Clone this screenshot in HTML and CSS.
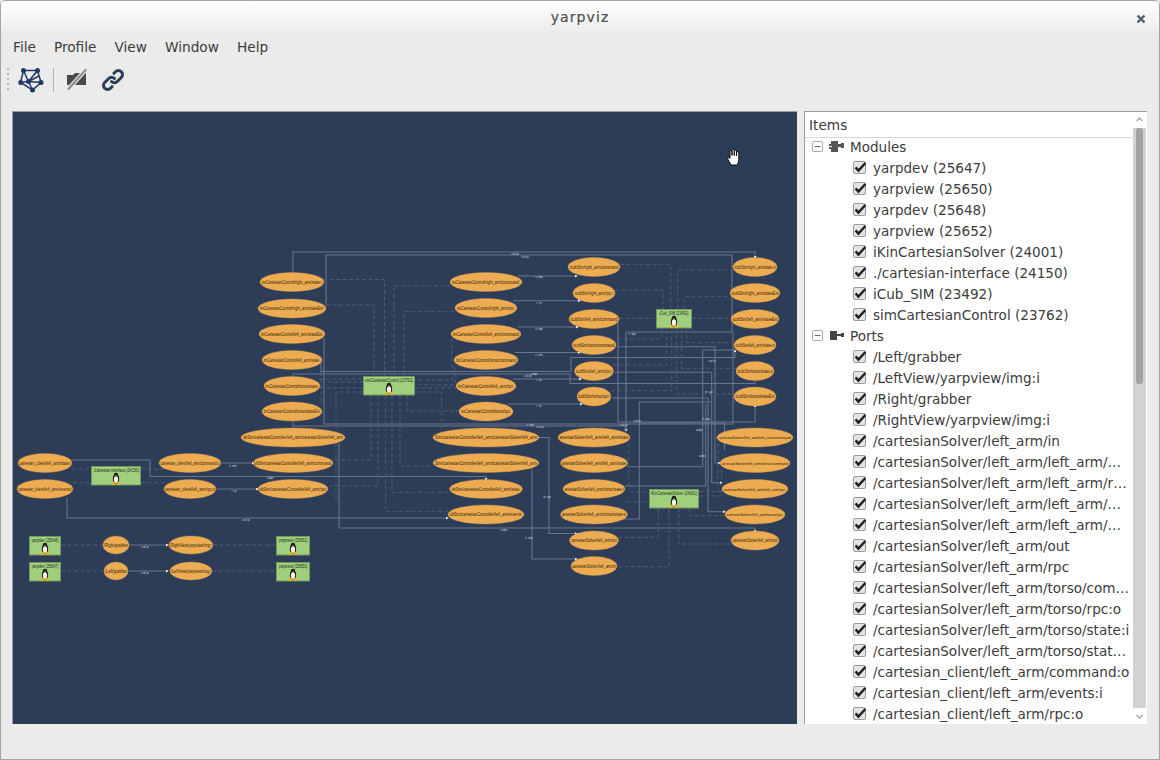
FILE: index.html
```html
<!DOCTYPE html>
<html lang="en">
<head>
<meta charset="utf-8">
<title>yarpviz</title>
<link rel="stylesheet" href="styles.css">
</head>
<body>
<svg class="defs" width="0" height="0">
  <defs>
    <marker id="tip" viewBox="0 0 4 4" refX="3" refY="2" markerWidth="3" markerHeight="3" markerUnits="userSpaceOnUse" orient="auto"><path d="M0 0L4 2L0 4Z" fill="#eef0f4"/></marker>
    <symbol id="tux" viewBox="0 0 12 14">
      <ellipse cx="6" cy="7.5" rx="3.4" ry="5" fill="#1d1d1f"/>
      <circle cx="6" cy="3" r="2.3" fill="#1d1d1f"/>
      <ellipse cx="6" cy="8.2" rx="2.3" ry="3.7" fill="#f4f4f0"/>
      <path d="M5.1 3.4h1.8L6 4.5Z" fill="#f2b21c"/>
      <path d="M0.5 12L4.300 10.300L5.300 13.300L2 14Z M11.500 12L7.700 10.300L6.700 13.300L10 14Z" fill="#f3b41b"/>
    </symbol>
    <symbol id="check" viewBox="0 0 13 13">
      <rect x="0.5" y="0.5" width="12" height="12" rx="1.5" fill="#e4e4e4" stroke="#9a9a9a"/>
      <path d="M2.6 6.4L5.4 9.6L12.4 2" fill="none" stroke="#202020" stroke-width="2.4"/>
    </symbol>
    <symbol id="minus" viewBox="0 0 11 11">
      <rect x="0.5" y="0.5" width="10" height="10" rx="1.5" fill="#fff" stroke="#aaaaaa"/>
      <path d="M2.5 5.5H8.5" stroke="#666" stroke-width="1"/>
    </symbol>
  </defs>
</svg>

<div class="window">
  <header class="titlebar">
    <span class="title">yarpviz</span>
    <svg class="close" width="10" height="10" viewBox="0 0 10 10"><path d="M1.5 1.5L8.5 8.5M8.5 1.5L1.5 8.5" stroke="#4f5f6f" stroke-width="2.4"/></svg>
  </header>

  <nav class="menubar">
    <span>File</span><span>Profile</span><span>View</span><span>Window</span><span>Help</span>
  </nav>

  <div class="toolbar">
    <span class="grip"></span>
    <button class="tool">
      <svg width="26" height="26" viewBox="0 0 26 26">
        <g stroke="#1f3a68" stroke-width="1.5" fill="none">
          <path d="M5.500 3.500L19.500 3.500L23 15.500L14.500 23L2.500 15.500Z"/>
          <path d="M5.500 3.500L10.500 14.500L19.500 3.500M2.500 15.500L10.500 14.500L23 15.500M10.500 14.500L14.500 23M10.500 14.500L21 9"/>
        </g>
        <g fill="#1f3a68">
          <circle cx="5.500" cy="3.500" r="2.500"/><circle cx="19.500" cy="3.500" r="2.500"/><circle cx="23" cy="15.500" r="2.500"/>
          <circle cx="2.800" cy="15.500" r="2.500"/><circle cx="14.500" cy="23" r="2.500"/><circle cx="10.500" cy="14.500" r="2.500"/>
        </g>
      </svg>
    </button>
    <span class="sep"></span>
    <button class="tool tool-gap">
      <svg width="24" height="24" viewBox="0 0 24 24">
        <path d="M2 7H8L10 5H21V17H2Z" fill="#4a4a4a"/>
        <path d="M3 21.5L21 1.5" stroke="#ececec" stroke-width="4.2"/>
        <path d="M3 21.5L21 1.5" stroke="#8d8d8d" stroke-width="2.2"/>
      </svg>
    </button>
    <button class="tool tool-on">
      <svg width="24" height="24" viewBox="0 0 24 24" fill="none" stroke="#2c3e57" stroke-width="3" stroke-linecap="round">
        <path d="M10.5 13.5a4 4 0 0 0 5.800 0l4-4a4.100 4.100 0 0 0-5.800-5.800l-1.600 1.600"/>
        <path d="M13.5 10.5a4 4 0 0 0-5.800 0l-4 4a4.100 4.100 0 0 0 5.800 5.800l1.600-1.600"/>
      </svg>
    </button>
  </div>

  <main class="content">
    <section class="canvas">
      <svg class="graph" width="784" height="612" viewBox="13 112 784 612">
        <g class="edge">
          <path marker-end="url(#tip)" d="M293 273V252H755V258"/>
          <path marker-end="url(#tip)" d="M326 305V255H732V332H626V431"/>
          <path d="M324 338V424H733V332"/>
          <path d="M293 421V426H625V431"/>
          <path marker-end="url(#tip)" d="M321 362V371.5H571V357.5H735V350"/>
          <path d="M293 377V374H570V383.5H755V381"/>
          <path marker-end="url(#tip)" d="M518 276H577"/>
          <path marker-end="url(#tip)" d="M513 300.7H580"/>
          <path marker-end="url(#tip)" d="M518 327H578"/>
          <path marker-end="url(#tip)" d="M515 352.5H580"/>
          <path marker-end="url(#tip)" d="M513 379H581"/>
          <path marker-end="url(#tip)" d="M508 404H582"/>
          <path marker-end="url(#tip)" d="M618 319V422H755V405"/>
          <path marker-end="url(#tip)" d="M72 460H150V476.5H486V480"/>
          <path marker-end="url(#tip)" d="M222 463H254"/>
          <path marker-end="url(#tip)" d="M216 489H258"/>
          <path marker-end="url(#tip)" d="M67 498V518H448"/>
          <path marker-end="url(#tip)" d="M339 443V528H755V532"/>
          <path marker-end="url(#tip)" d="M538 437.5H549V533.5H577"/>
          <path marker-end="url(#tip)" d="M532 467V559H577"/>
          <path d="M627 466.7H702.7V350H735"/>
          <path d="M625 486H705.7V404"/>
          <path marker-end="url(#tip)" d="M615 372.3H711.7V482.7H722"/>
          <path marker-end="url(#tip)" d="M618 346.7H715V463H720"/>
          <path d="M623 519H639.3V402H712"/>
          <path marker-end="url(#tip)" d="M612 398H708V511.7H725"/>
          <path d="M640 423H724.5V450"/>
          <path marker-end="url(#tip)" d="M129 545H168"/>
          <path marker-end="url(#tip)" d="M128 571H168"/>
        </g>
        <g class="dash">
          <path d="M323 279.5H384.5V376"/>
          <path d="M326 305H374V376"/>
          <path d="M394 376V285.7H450"/>
          <path d="M404 376V311.7H455"/>
          <path d="M452 338V380H415"/>
          <path d="M455 360V385H415"/>
          <path d="M415 388H456"/>
          <path d="M407 395V411H459"/>
          <path d="M319 379H363"/>
          <path d="M321 382H363"/>
          <path d="M320 388H363"/>
          <path d="M321 372V405"/>
          <path d="M363 392H336V500"/>
          <path d="M371 395V460H335"/>
          <path d="M378 395V486H330"/>
          <path d="M385.7 395V511.7H448"/>
          <path d="M392 395V492.3H450"/>
          <path d="M400 395V466H433"/>
          <path d="M415 392H441.7V433"/>
          <path d="M72 469H91"/>
          <path d="M73 482.7H91"/>
          <path d="M141 469H165"/>
          <path d="M141 482.7H168"/>
          <path d="M61 545H103"/>
          <path d="M61 571H104"/>
          <path d="M213 545H276"/>
          <path d="M212 571H276"/>
          <path d="M620 264.3H670.7V309"/>
          <path d="M615 290H663V309"/>
          <path d="M677.7 309V270H733"/>
          <path d="M684 309V296.7H731"/>
          <path d="M619 318.3H656"/>
          <path d="M692 318.3H731"/>
          <path d="M617 339H661.7V328"/>
          <path d="M613 365H666.7V328"/>
          <path d="M611 390.7H671.7V328"/>
          <path d="M676.7 328V394H735"/>
          <path d="M681.7 328V368.3H736"/>
          <path d="M686.7 328V342.7H734"/>
          <path d="M630 491.7H649"/>
          <path d="M627 501.7H649"/>
          <path d="M628.7 437V490"/>
          <path d="M618 537.3H658.3V508"/>
          <path d="M618 566.7H669V508"/>
          <path d="M679 508V544H731"/>
          <path d="M689.3 508V515.7H726"/>
          <path d="M699 491.7H724"/>
          <path d="M699 496H722"/>
          <path d="M718 437V496"/>
          <path d="M721.7 463V491.7"/>
        </g>

        <g class="elabels">
          <text x="515" y="255">cd p</text><text x="525" y="258">cd p</text>
          <text x="539" y="278">c dp</text><text x="539" y="304">r p</text>
          <text x="539" y="330">c dp</text><text x="539" y="356">c dn</text>
          <text x="539" y="381">r p</text><text x="539" y="407">r p</text>
          <text x="528" y="377">cd p</text><text x="534" y="375">sdp</text>
          <text x="530" y="426">c dp</text><text x="540" y="428">cd p</text>
          <text x="632" y="335">c dp</text><text x="712" y="362">cd p</text>
          <text x="709" y="393">b sp</text><text x="706" y="420">b sp</text>
          <text x="699" y="431">sdp</text><text x="702" y="457">sdp</text>
          <text x="637" y="422">cd p</text><text x="624" y="426">cd p</text>
          <text x="547" y="498">b sp</text><text x="504" y="531">sdp</text>
          <text x="529" y="539">c dp</text><text x="233" y="467">c dn</text>
          <text x="234" y="492">r p</text><text x="270" y="479">sdp</text>
          <text x="246" y="521">cd p</text><text x="145" y="548">cd p</text>
          <text x="145" y="574">cd p</text>
        </g>

        <g class="port">
          <ellipse cx="292" cy="282" rx="32" ry="9.5"/><text x="292" y="283.7" textLength="60" lengthAdjust="spacingAndGlyphs">imCartesianControl/right_arm/state:i</text>
          <ellipse cx="292" cy="308.5" rx="34" ry="9.5"/><text x="292" y="310.2" textLength="64" lengthAdjust="spacingAndGlyphs">imCartesianControl/right_arm/stateExt:</text>
          <ellipse cx="292" cy="334" rx="33" ry="9.5"/><text x="292" y="335.7" textLength="62" lengthAdjust="spacingAndGlyphs">imCartesianControl/left_arm/stateExt:</text>
          <ellipse cx="292" cy="360" rx="30" ry="9.5"/><text x="292" y="361.7" textLength="57" lengthAdjust="spacingAndGlyphs">imCartesianControl/left_arm/state:</text>
          <ellipse cx="292" cy="386" rx="28" ry="9.5"/><text x="292" y="387.7" textLength="53" lengthAdjust="spacingAndGlyphs">imCartesianControl/torso/state:</text>
          <ellipse cx="292" cy="411.5" rx="30" ry="9.5"/><text x="292" y="413.2" textLength="57" lengthAdjust="spacingAndGlyphs">imCartesianControl/torso/stateExt:</text>

          <ellipse cx="486" cy="282" rx="36" ry="9.5"/><text x="486" y="283.7" textLength="68" lengthAdjust="spacingAndGlyphs">imCartesianControl/right_arm/command:</text>
          <ellipse cx="486" cy="308" rx="31" ry="9.5"/><text x="486" y="309.7" textLength="58" lengthAdjust="spacingAndGlyphs">imCartesianControl/right_arm/rpc:</text>
          <ellipse cx="486" cy="334" rx="35" ry="9.5"/><text x="486" y="335.7" textLength="66" lengthAdjust="spacingAndGlyphs">imCartesianControl/left_arm/command</text>
          <ellipse cx="486" cy="360" rx="32" ry="9.5"/><text x="486" y="361.7" textLength="60" lengthAdjust="spacingAndGlyphs">imCartesianControl/torso/command</text>
          <ellipse cx="486" cy="386" rx="30" ry="9.5"/><text x="486" y="387.7" textLength="56" lengthAdjust="spacingAndGlyphs">imCartesianControl/left_arm/rpc:</text>
          <ellipse cx="486" cy="411.5" rx="27" ry="9.5"/><text x="486" y="413.2" textLength="50" lengthAdjust="spacingAndGlyphs">imCartesianControl/torso/rpc:</text>

          <ellipse cx="594" cy="267" rx="26" ry="9.5"/><text x="594" y="268.7" textLength="48" lengthAdjust="spacingAndGlyphs">icubSim/right_arm/command</text>
          <ellipse cx="594" cy="293" rx="21" ry="9.5"/><text x="594" y="294.7" textLength="38" lengthAdjust="spacingAndGlyphs">icubSim/right_arm/rpc:i</text>
          <ellipse cx="594" cy="319" rx="25" ry="9.5"/><text x="594" y="320.7" textLength="47" lengthAdjust="spacingAndGlyphs">icubSim/left_arm/command</text>
          <ellipse cx="594" cy="345" rx="22" ry="9.5"/><text x="594" y="346.7" textLength="41" lengthAdjust="spacingAndGlyphs">icubSim/torso/command</text>
          <ellipse cx="594" cy="371" rx="19.5" ry="9.5"/><text x="594" y="372.7" textLength="36" lengthAdjust="spacingAndGlyphs">icubSim/left_arm/rpc:i</text>
          <ellipse cx="594" cy="396.5" rx="17" ry="9.5"/><text x="594" y="398.2" textLength="32" lengthAdjust="spacingAndGlyphs">icubSim/torso/rpc:i</text>

          <ellipse cx="755" cy="267" rx="22" ry="9.5"/><text x="755" y="268.7" textLength="41" lengthAdjust="spacingAndGlyphs">icubSim/right_arm/state:o</text>
          <ellipse cx="755" cy="293" rx="25" ry="9.5"/><text x="755" y="294.7" textLength="47" lengthAdjust="spacingAndGlyphs">icubSim/right_arm/stateExt</text>
          <ellipse cx="755" cy="319" rx="24" ry="9.5"/><text x="755" y="320.7" textLength="45" lengthAdjust="spacingAndGlyphs">icubSim/left_arm/stateExt</text>
          <ellipse cx="755" cy="345" rx="21" ry="9.5"/><text x="755" y="346.7" textLength="39" lengthAdjust="spacingAndGlyphs">icubSim/left_arm/state:o</text>
          <ellipse cx="755" cy="371" rx="19" ry="9.5"/><text x="755" y="372.7" textLength="35" lengthAdjust="spacingAndGlyphs">icubSim/torso/state:o</text>
          <ellipse cx="755" cy="396.5" rx="21" ry="9.5"/><text x="755" y="398.2" textLength="39" lengthAdjust="spacingAndGlyphs">icubSim/torso/stateExt</text>

          <ellipse cx="293" cy="437.5" rx="52" ry="9.5"/><text x="293" y="439.2" textLength="100" lengthAdjust="spacingAndGlyphs">ubSim/cartesianController/left_arm/cartesianSolver/left_arm</text>
          <ellipse cx="486" cy="437.5" rx="53" ry="9.5"/><text x="486" y="439.2" textLength="102" lengthAdjust="spacingAndGlyphs">Sim/cartesianController/left_arm/cartesianSolver/left_arm</text>
          <ellipse cx="486" cy="463" rx="53" ry="9.5"/><text x="486" y="464.7" textLength="102" lengthAdjust="spacingAndGlyphs">Sim/cartesianController/left_arm/cartesianSolver/left_arm</text>
          <ellipse cx="486" cy="489" rx="36.5" ry="9.5"/><text x="486" y="490.7" textLength="69" lengthAdjust="spacingAndGlyphs">ubSim/cartesianController/left_arm/state:</text>
          <ellipse cx="486" cy="514.5" rx="38" ry="9.5"/><text x="486" y="516.2" textLength="73" lengthAdjust="spacingAndGlyphs">ubSim/cartesianController/left_arm/events:</text>

          <ellipse cx="594" cy="437.5" rx="36" ry="9.5"/><text x="594" y="439.2" textLength="69" lengthAdjust="spacingAndGlyphs">artesianSolver/left_arm/left_arm/state</text>
          <ellipse cx="594" cy="463" rx="33.5" ry="9.5"/><text x="594" y="464.7" textLength="64" lengthAdjust="spacingAndGlyphs">artesianSolver/left_arm/left_arm/state</text>
          <ellipse cx="594" cy="489" rx="31" ry="9.5"/><text x="594" y="490.7" textLength="59" lengthAdjust="spacingAndGlyphs">artesianSolver/left_arm/torso/state:i</text>
          <ellipse cx="594" cy="514.5" rx="33.5" ry="9.5"/><text x="594" y="516.2" textLength="64" lengthAdjust="spacingAndGlyphs">artesianSolver/left_arm/torso/state:o</text>
          <ellipse cx="594" cy="540.5" rx="24.5" ry="9.5"/><text x="594" y="542.2" textLength="46" lengthAdjust="spacingAndGlyphs">cartesianSolver/left_arm/rpc</text>
          <ellipse cx="594" cy="566" rx="23" ry="9.5"/><text x="594" y="567.7" textLength="44" lengthAdjust="spacingAndGlyphs">cartesianSolver/left_arm/in</text>

          <ellipse cx="755" cy="437.5" rx="38" ry="9.5"/><text class="long" x="755" y="439" textLength="72" lengthAdjust="spacingAndGlyphs">artesianSolver/left_arm/left_arm/command</text>
          <ellipse cx="755" cy="463" rx="35" ry="9.5"/><text class="long" x="755" y="464.5" textLength="66" lengthAdjust="spacingAndGlyphs">artesianSolver/left_arm/torso/command</text>
          <ellipse cx="755" cy="489" rx="33" ry="9.5"/><text class="long" x="755" y="490.5" textLength="62" lengthAdjust="spacingAndGlyphs">artesianSolver/left_arm/left_arm/rpc:</text>
          <ellipse cx="755" cy="514.5" rx="30" ry="9.5"/><text class="long" x="755" y="516" textLength="57" lengthAdjust="spacingAndGlyphs">artesianSolver/left_arm/torso/rpc:</text>
          <ellipse cx="755" cy="540.5" rx="24" ry="9.5"/><text x="755" y="542.2" textLength="45" lengthAdjust="spacingAndGlyphs">cartesianSolver/left_arm/out</text>

          <ellipse cx="45" cy="463" rx="27" ry="9.5"/><text x="45" y="464.7" textLength="52" lengthAdjust="spacingAndGlyphs">cartesian_client/left_arm/state:i</text>
          <ellipse cx="45" cy="489" rx="28" ry="9.5"/><text x="45" y="490.7" textLength="54" lengthAdjust="spacingAndGlyphs">cartesian_client/left_arm/events:i</text>
          <ellipse cx="190" cy="463" rx="31" ry="9.5"/><text x="190" y="464.7" textLength="59" lengthAdjust="spacingAndGlyphs">cartesian_client/left_arm/command:o</text>
          <ellipse cx="190" cy="489" rx="26" ry="9.5"/><text x="190" y="490.7" textLength="50" lengthAdjust="spacingAndGlyphs">cartesian_client/left_arm/rpc:o</text>
          <ellipse cx="293" cy="463" rx="40" ry="9.5"/><text x="293" y="464.7" textLength="78" lengthAdjust="spacingAndGlyphs">ubSim/cartesianController/left_arm/command:</text>
          <ellipse cx="293" cy="489" rx="35" ry="9.5"/><text x="293" y="490.7" textLength="68" lengthAdjust="spacingAndGlyphs">ubSim/cartesianController/left_arm/rpc:</text>

          <ellipse cx="116" cy="545" rx="13" ry="9"/><text x="116" y="546.7" textLength="24" lengthAdjust="spacingAndGlyphs">/Right/grabber</text>
          <ellipse cx="116" cy="571" rx="12" ry="9"/><text x="116" y="572.7" textLength="22" lengthAdjust="spacingAndGlyphs">/Left/grabber</text>
          <ellipse cx="191" cy="545" rx="22" ry="9"/><text x="191" y="546.7" textLength="42" lengthAdjust="spacingAndGlyphs">/RightView/yarpview/img:i</text>
          <ellipse cx="191" cy="571" rx="21" ry="9"/><text x="191" y="572.7" textLength="40" lengthAdjust="spacingAndGlyphs">/LeftView/yarpview/img:i</text>
        </g>

        <g class="module">
          <rect x="363.5" y="376.5" width="51" height="18.5"/><text x="389" y="382" textLength="48" lengthAdjust="spacingAndGlyphs">simCartesianControl (23762)</text><use href="#tux" x="383" y="382" width="12" height="13"/>
          <rect x="656.5" y="309.5" width="35" height="18.5"/><text x="674" y="315" textLength="29" lengthAdjust="spacingAndGlyphs">iCub_SIM (23492)</text><use href="#tux" x="668" y="315" width="12" height="13"/>
          <rect x="649.5" y="489.5" width="49" height="18.5"/><text x="674" y="494.5" textLength="46" lengthAdjust="spacingAndGlyphs">iKinCartesianSolver (24001)</text><use href="#tux" x="668" y="495" width="12" height="13"/>
          <rect x="91.5" y="466.5" width="49" height="18.5"/><text x="116" y="472" textLength="46" lengthAdjust="spacingAndGlyphs">./cartesian-interface (24150)</text><use href="#tux" x="110" y="472" width="12" height="13"/>
          <rect x="29.5" y="536.5" width="31" height="18.5"/><text x="45" y="541.5" textLength="27" lengthAdjust="spacingAndGlyphs">yarpdev (25648)</text><use href="#tux" x="39" y="542" width="12" height="13"/>
          <rect x="29.5" y="562.5" width="31" height="18.5"/><text x="45" y="567.5" textLength="27" lengthAdjust="spacingAndGlyphs">yarpdev (25647)</text><use href="#tux" x="39" y="568" width="12" height="13"/>
          <rect x="276.5" y="536.5" width="33" height="18.5"/><text x="293" y="541.5" textLength="29" lengthAdjust="spacingAndGlyphs">yarpview (25652)</text><use href="#tux" x="287" y="542" width="12" height="13"/>
          <rect x="276.5" y="562.5" width="33" height="18.5"/><text x="293" y="567.5" textLength="29" lengthAdjust="spacingAndGlyphs">yarpview (25650)</text><use href="#tux" x="287" y="568" width="12" height="13"/>
        </g>
      </svg>
      <svg class="cursor" width="16" height="18" viewBox="0 0 16 18">
        <path d="M5 17L2 11.5Q1 9.500 2.500 9.200L4 10.500V3Q5 1.700 6 3V7.500V2Q7.200 .6 8.300 2V7.500V2.800Q9.500 1.600 10.500 3V8V4.300Q11.800 3.200 12.800 4.500V12L11.500 17Z" fill="#fff" stroke="#111" stroke-width="1" stroke-linejoin="round"/>
      </svg>
    </section>

    <aside class="panel">
      <div class="tree">
        <div class="tree-head">Items</div>
        <div class="rows">
          <div class="row group">
            <svg class="exp" width="11" height="11"><use href="#minus"/></svg>
            <svg class="gicon" width="15" height="13" viewBox="0 0 15 13"><path d="M2 1H9V4H12V3H15V8H12V7H9V12H2V9H0V7H3V6H0V4H2Z" fill="#555"/></svg>
            <span>Modules</span>
          </div>
          <div class="row"><svg class="chk" width="13" height="13"><use href="#check"/></svg><span>yarpdev (25647)</span></div>
          <div class="row"><svg class="chk" width="13" height="13"><use href="#check"/></svg><span>yarpview (25650)</span></div>
          <div class="row"><svg class="chk" width="13" height="13"><use href="#check"/></svg><span>yarpdev (25648)</span></div>
          <div class="row"><svg class="chk" width="13" height="13"><use href="#check"/></svg><span>yarpview (25652)</span></div>
          <div class="row"><svg class="chk" width="13" height="13"><use href="#check"/></svg><span>iKinCartesianSolver (24001)</span></div>
          <div class="row"><svg class="chk" width="13" height="13"><use href="#check"/></svg><span>./cartesian-interface (24150)</span></div>
          <div class="row"><svg class="chk" width="13" height="13"><use href="#check"/></svg><span>iCub_SIM (23492)</span></div>
          <div class="row"><svg class="chk" width="13" height="13"><use href="#check"/></svg><span>simCartesianControl (23762)</span></div>
          <div class="row group">
            <svg class="exp" width="11" height="11"><use href="#minus"/></svg>
            <svg class="gicon" width="15" height="13" viewBox="0 0 15 13"><path d="M1 2H8V5H12V4H15V8H12V7H8V11H1Z" fill="#444"/></svg>
            <span>Ports</span>
          </div>
          <div class="row"><svg class="chk" width="13" height="13"><use href="#check"/></svg><span>/Left/grabber</span></div>
          <div class="row"><svg class="chk" width="13" height="13"><use href="#check"/></svg><span>/LeftView/yarpview/img:i</span></div>
          <div class="row"><svg class="chk" width="13" height="13"><use href="#check"/></svg><span>/Right/grabber</span></div>
          <div class="row"><svg class="chk" width="13" height="13"><use href="#check"/></svg><span>/RightView/yarpview/img:i</span></div>
          <div class="row"><svg class="chk" width="13" height="13"><use href="#check"/></svg><span>/cartesianSolver/left_arm/in</span></div>
          <div class="row"><svg class="chk" width="13" height="13"><use href="#check"/></svg><span>/cartesianSolver/left_arm/left_arm/…</span></div>
          <div class="row"><svg class="chk" width="13" height="13"><use href="#check"/></svg><span>/cartesianSolver/left_arm/left_arm/r…</span></div>
          <div class="row"><svg class="chk" width="13" height="13"><use href="#check"/></svg><span>/cartesianSolver/left_arm/left_arm/…</span></div>
          <div class="row"><svg class="chk" width="13" height="13"><use href="#check"/></svg><span>/cartesianSolver/left_arm/left_arm/…</span></div>
          <div class="row"><svg class="chk" width="13" height="13"><use href="#check"/></svg><span>/cartesianSolver/left_arm/out</span></div>
          <div class="row"><svg class="chk" width="13" height="13"><use href="#check"/></svg><span>/cartesianSolver/left_arm/rpc</span></div>
          <div class="row"><svg class="chk" width="13" height="13"><use href="#check"/></svg><span>/cartesianSolver/left_arm/torso/com…</span></div>
          <div class="row"><svg class="chk" width="13" height="13"><use href="#check"/></svg><span>/cartesianSolver/left_arm/torso/rpc:o</span></div>
          <div class="row"><svg class="chk" width="13" height="13"><use href="#check"/></svg><span>/cartesianSolver/left_arm/torso/state:i</span></div>
          <div class="row"><svg class="chk" width="13" height="13"><use href="#check"/></svg><span>/cartesianSolver/left_arm/torso/stat…</span></div>
          <div class="row"><svg class="chk" width="13" height="13"><use href="#check"/></svg><span>/cartesian_client/left_arm/command:o</span></div>
          <div class="row"><svg class="chk" width="13" height="13"><use href="#check"/></svg><span>/cartesian_client/left_arm/events:i</span></div>
          <div class="row"><svg class="chk" width="13" height="13"><use href="#check"/></svg><span>/cartesian_client/left_arm/rpc:o</span></div>
        </div>
      </div>
      <div class="scrollbar">
        <svg class="sb-arrow" width="13" height="16" viewBox="0 0 13 16"><path d="M3.500 9L6.500 6L9.500 9" fill="none" stroke="#a8a8a8" stroke-width="1.500"/></svg>
        <div class="sb-track"><div class="sb-thumb"></div></div>
        <svg class="sb-arrow" width="13" height="16" viewBox="0 0 13 16"><path d="M3.500 7L6.500 10L9.500 7" fill="none" stroke="#a8a8a8" stroke-width="1.500"/></svg>
      </div>
    </aside>
  </main>
</div>
</body>
</html>
```
FILE: styles.css
```css
* { box-sizing: border-box; }
html, body { margin: 0; height: 100%; }
body { background: #ebebeb; font-family: "DejaVu Sans", sans-serif; color: #3c3c3c; overflow: hidden; }
.defs { position: absolute; }

.window {
  width: 1160px;
  height: 760px;
  display: flex;
  flex-direction: column;
  background: #ebebeb;
  border: 1px solid #a4a4a4;
  border-radius: 5px 5px 0 0;
  overflow: hidden;
}

.titlebar {
  height: 33px;
  flex: none;
  display: flex;
  align-items: center;
  justify-content: center;
  padding-bottom: 2px;
  position: relative;
  background: linear-gradient(#ffffff, #ebebeb);
}
.title { font-size: 14px; font-weight: 400; letter-spacing: 1.1px; color: #4f4f4f; -webkit-text-stroke: 0.2px #4f4f4f; }
.close { position: absolute; right: 13px; top: 13px; }

.menubar {
  height: 26px;
  flex: none;
  display: flex;
  align-items: center;
  gap: 18px;
  padding: 0 12px;
  font-size: 13.7px;
}

.toolbar {
  height: 40px;
  flex: none;
  display: flex;
  align-items: center;
  padding-left: 6px;
}
.grip { width: 2px; height: 24px; margin-right: 9px; background: repeating-linear-gradient(#b4b4b4 0 2px, transparent 2px 5px); }
.tool { width: 26px; height: 26px; padding: 0; border: 0; background: none; display: flex; align-items: center; justify-content: center; }
.sep { width: 1px; height: 24px; background: #b0b0b0; margin: 0 11px 0 9px; }
.tool-gap { margin-right: 12px; width: 24px; }
.tool-on { width: 24px; height: 24px; background: #e9e9e9; }

.content {
  height: 613px;
  margin-top: 11px;
  flex: none;
  display: flex;
  padding-left: 11px;
}

.canvas {
  width: 785px;
  position: relative;
  background: #2e3d57;
  border-top: 1px solid #9c9c9c;
  border-left: 1px solid #9c9c9c;
  overflow: hidden;
}
.graph { display: block; }
.cursor { position: absolute; left: 713px; top: 36px; }

.edge path { fill: none; stroke: #66748c; stroke-width: 1.1; }
.dash path { fill: none; stroke: #4e5c75; stroke-width: 1; stroke-dasharray: 4 2.5; }
.elabels text { font: 3.6px "DejaVu Sans", sans-serif; fill: #c3cad5; text-anchor: middle; }
.port ellipse { fill: #edac52; stroke: #c99a55; stroke-width: 0.4; }
.port text { font: 4.9px "Liberation Sans", sans-serif; fill: #2e1e08; text-anchor: middle; }
.port text.long { font-size: 4.1px; }
.module rect { fill: #a0d07e; stroke: #6b9a5c; stroke-width: 1; }
.module text { font: 4.6px "Liberation Sans", sans-serif; fill: #1f2b16; text-anchor: middle; }

.panel {
  width: 343px;
  margin-left: 7px;
  display: flex;
  background: #fff;
  border-top: 1px solid #9c9c9c;
  border-left: 1px solid #9c9c9c;
}
.tree { flex: 1; min-width: 0; overflow: hidden; }
.tree-head { height: 26px; padding: 3px 4px 0; font-size: 13.7px; line-height: 21px; border-bottom: 1px solid #d8d8d8; }
.rows { margin-top: -2px; }
.row { height: 21px; display: flex; align-items: center; padding-left: 48px; font-size: 13.55px; white-space: nowrap; }
.row span { margin-left: 7px; }
.group { padding-left: 7px; }
.group .gicon { margin-left: 6px; }
.group span { margin-left: 6px; }
.exp, .gicon, .chk { flex: none; }

.scrollbar { width: 13px; margin-right: 1px; flex: none; display: flex; flex-direction: column; background: #fff; }
.sb-arrow { flex: none; display: block; }
.sb-track { flex: 1; background: #d2d2d2; padding: 0 3px; }
.sb-thumb { height: 256px; background: #a2a2a2; border-radius: 3px; }
```
